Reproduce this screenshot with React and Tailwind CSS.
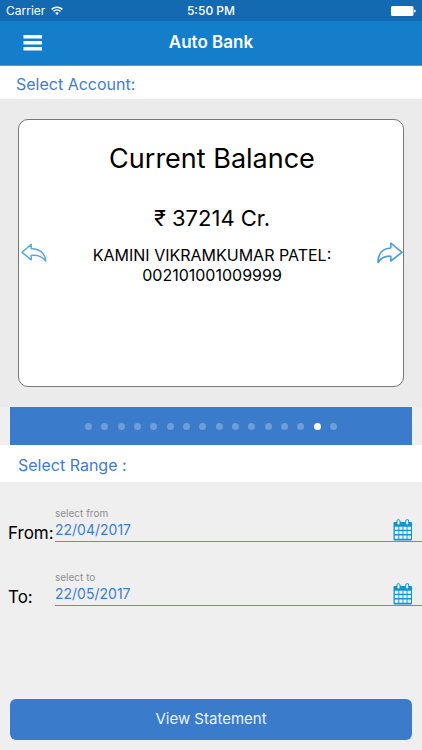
import React, { useState } from 'react';

const ACCOUNT_COUNT = 16;

const WifiIcon = () => (
    <svg width="12" height="9" viewBox="0 0 12 9" fill="none" stroke="white" strokeWidth="1.5">
        <path d="M0.6 3.4a7.6 7.6 0 0 1 10.8 0" />
        <path d="M2.5 5.4a5 5 0 0 1 7 0" />
        <path d="M6 9L4.1 7.1a2.7 2.7 0 0 1 3.8 0z" fill="white" stroke="none" />
    </svg>
);

const BatteryIcon = () => (
    <svg width="25" height="10" viewBox="0 0 25 10" fill="white">
        <rect x="0" y="0" width="22.5" height="10" rx="1.5" />
        <path d="M23.2 3.4q1.6 0.4 1.6 1.6t-1.6 1.6z" />
    </svg>
);

const MenuIcon = () => (
    <svg width="20" height="16" viewBox="0 0 20 16" fill="white">
        <rect x="0.5" y="0" width="18.5" height="3.5" />
        <rect x="0.5" y="6" width="18.5" height="3.5" />
        <rect x="0.5" y="12" width="18.5" height="3.5" />
    </svg>
);

const BackArrow = () => (
    <svg width="26" height="20" viewBox="0 0 26 20" fill="none" stroke="#58a8e2" strokeWidth="1.5" strokeLinejoin="round">
        <path d="M1 9.3L10.2 1.4V5.7C18 5.4 24 9.5 24.8 18C21.5 13.8 16.5 11.7 10.2 12.4V16.8z" />
    </svg>
);

const ForwardArrow = () => (
    <svg width="26" height="22" viewBox="0 0 26 22" fill="none" stroke="#4a9ddf" strokeWidth="1.6" strokeLinejoin="round">
        <path d="M25 10.3L13.8 1.2V6C5.5 6.4 1 11.5 1 20.6C3.8 15.8 7.6 13.8 13.8 14.2V19z" />
    </svg>
);

const CalendarIcon = () => (
    <svg width="20" height="22" viewBox="0 0 20 22">
        <rect x="0.5" y="3" width="18.5" height="18.5" rx="1" fill="#1593cf" />
        <g fill="#e9f6fc">
            <path d="M1.8 7.8h3.6v2.9H1.8zM6.3 7.8h3.2v2.9H6.3zM10.4 7.8h3.2v2.9h-3.2zM14.5 7.8h3.4v2.9h-3.4z" />
            <path d="M1.8 12.1h3.6V15H1.8zM6.3 12.1h3.2V15H6.3zM10.4 12.1h3.2V15h-3.2zM14.5 12.1h3.4V15h-3.4z" />
            <path d="M1.8 16.5h3.6v3.2H1.8zM6.3 16.5h3.2v3.2H6.3zM10.4 16.5h3.2v3.2h-3.2zM14.5 16.5h3.4v3.2h-3.4z" />
        </g>
        <rect x="4" y="0.6" width="3" height="5.4" rx="1.4" fill="#efefef" stroke="#1593cf" />
        <rect x="12.7" y="0.6" width="3" height="5.4" rx="1.4" fill="#efefef" stroke="#1593cf" />
    </svg>
);

const DateField = ({ id, label, hint, value, onChange }) => (
    <div className="flex h-16 items-end pl-2">
        <label htmlFor={id} className="w-[47px] shrink-0 pb-[19px] text-[17px] leading-5 whitespace-nowrap text-black">
            {label}
        </label>
        <div className="mb-5 flex h-10 flex-1 items-end border-b border-[#5c90d0]">
            <div className="flex min-w-0 flex-1 flex-col">
                <span id={`${id}-hint`} className="text-[10px] leading-4 text-[#8e8e8e]">{hint}</span>
                <input
                    id={id}
                    type="text"
                    aria-describedby={`${id}-hint`}
                    value={value}
                    onChange={(e) => onChange(e.target.value)}
                    className="h-5 w-full bg-transparent pb-1 text-sm leading-4 text-[#3f7dcc] outline-none"
                />
            </div>
            <button type="button" aria-label={`Pick date ${hint}`} className="mr-[9px] shrink-0">
                <CalendarIcon />
            </button>
        </div>
    </div>
);

const App = () => {
    const [current, setCurrent] = useState(14);
    const [fromDate, setFromDate] = useState('22/04/2017');
    const [toDate, setToDate] = useState('22/05/2017');

    return (
        <div className="flex min-h-screen flex-col bg-[#efefef] font-['Inter',sans-serif]">
            {/* Status bar */}
            <div className="grid h-[21px] grid-cols-3 items-center bg-[#146ab0] px-1.5 text-xs leading-4 text-white">
                <div className="flex items-center gap-1.5">
                    <span>Carrier</span>
                    <WifiIcon />
                </div>
                <span className="text-center font-medium">5:50 PM</span>
                <div className="flex justify-end">
                    <BatteryIcon />
                </div>
            </div>

            {/* Title bar */}
            <header className="grid h-[45px] grid-cols-3 items-center border-b border-[#4b9bdb] bg-[#147ecb] px-[23px]">
                <button type="button" aria-label="Menu" className="w-5">
                    <MenuIcon />
                </button>
                <h1 className="text-center text-[17px] font-semibold whitespace-nowrap text-white">Auto Bank</h1>
            </header>

            <h2 className="bg-white px-4 pt-2 pb-[5px] text-base leading-5 text-[#3f7dcc]">Select Account:</h2>

            <section className="bg-[#ebebeb] px-[18px] py-5">
                <div className="flex h-[268px] items-center justify-between rounded-[10px] border border-[#777777] bg-white pl-0.5 text-black">
                    <button type="button" aria-label="Previous account" onClick={() => setCurrent(Math.max(0, current - 1))}>
                        <BackArrow />
                    </button>
                    <div className="flex flex-1 flex-col self-stretch pt-5 text-center">
                        <p className="text-[27px] leading-[38px]">Current Balance</p>
                        <p className="mt-6 text-[22px] leading-8">₹ 37214 Cr.</p>
                        <p className="mt-[11px] text-base leading-5">
                            KAMINI VIKRAMKUMAR PATEL:
                            <br />
                            002101001009999
                        </p>
                    </div>
                    <button
                        type="button"
                        aria-label="Next account"
                        onClick={() => setCurrent(Math.min(ACCOUNT_COUNT - 1, current + 1))}
                    >
                        <ForwardArrow />
                    </button>
                </div>
            </section>

            {/* Page dots */}
            <div className="mx-[10px] flex h-[38px] items-center justify-center bg-[#3b7bcb]">
                <div className="flex w-[252px] justify-between">
                    {Array.from({ length: ACCOUNT_COUNT }, (_, i) => (
                        <button
                            key={i}
                            type="button"
                            aria-label={`Account ${i + 1}`}
                            onClick={() => setCurrent(i)}
                            className={`size-[7px] rounded-full ${i === current ? 'bg-white' : 'bg-[#6d9eda]'}`}
                        />
                    ))}
                </div>
            </div>

            <h2 className="bg-white px-[18px] pt-[10px] pb-[7px] text-base leading-5 text-[#3f7dcc]">Select Range :</h2>

            <form className="flex flex-1 flex-col pt-4" onSubmit={(e) => e.preventDefault()}>
                <DateField id="from" label="From:" hint="select from" value={fromDate} onChange={setFromDate} />
                <DateField id="to" label="To:" hint="select to" value={toDate} onChange={setToDate} />

                <div className="mt-auto px-[10px] pb-[10px]">
                    <button type="submit" className="h-[41px] w-full rounded-md bg-[#3b7bcb] text-[15px] text-[#eaf3ff]">
                        View Statement
                    </button>
                </div>
            </form>
        </div>
    );
};

export default App;
